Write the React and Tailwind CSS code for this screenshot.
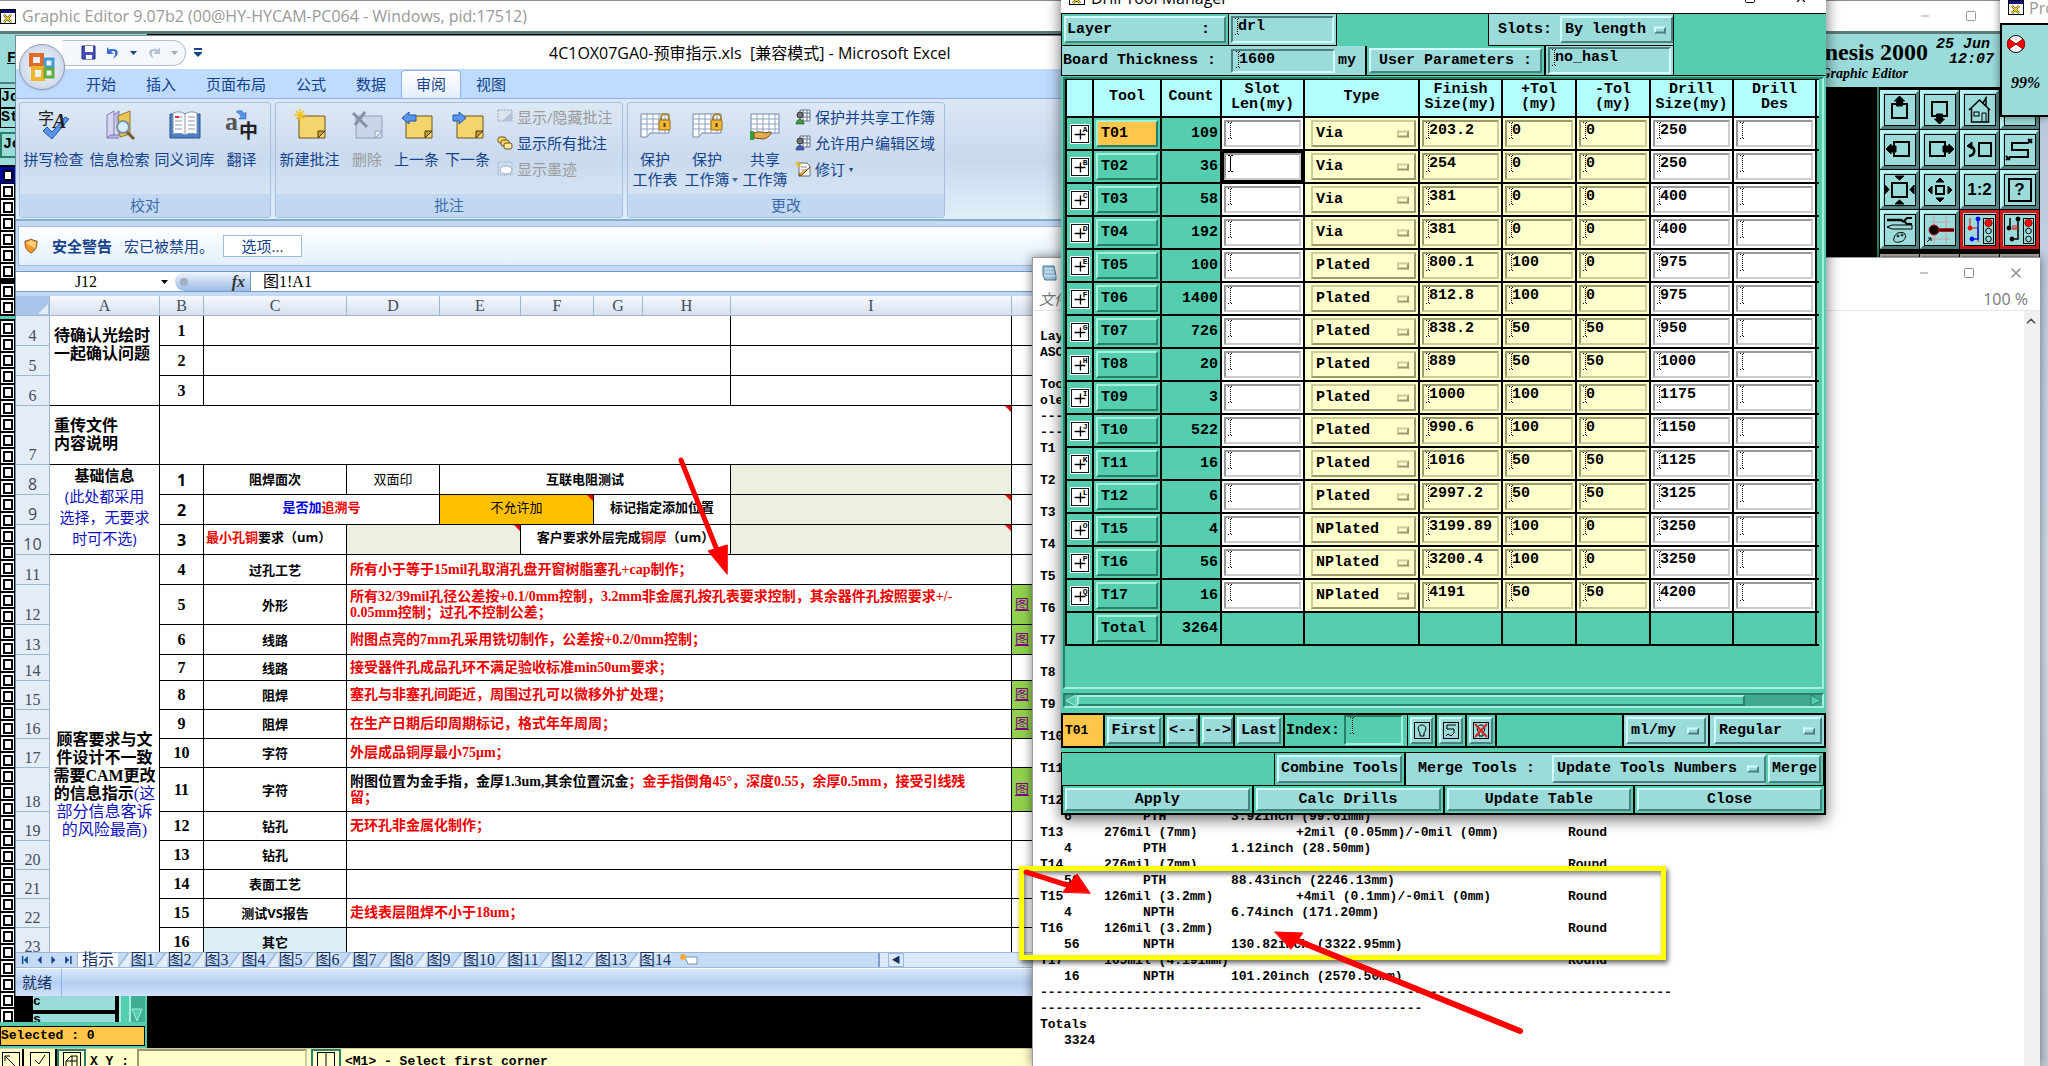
import React from 'react';
import { Minus, Square, X, ChevronUp } from 'lucide-react';

// Bevel styles shared by the Motif-like widgets
const tealBevel = 'border-2 border-t-[#a5f0dc] border-l-[#a5f0dc] border-b-[#2a7f68] border-r-[#2a7f68]';
const paleBevel = 'border-2 border-t-[#cfffff] border-l-[#cfffff] border-b-[#4d8080] border-r-[#4d8080]';
const paleInset = 'border-2 border-t-[#4d8080] border-l-[#4d8080] border-b-[#cfffff] border-r-[#cfffff]';
const tealInset = 'border-2 border-t-[#2a7f68] border-l-[#2a7f68] border-b-[#a5f0dc] border-r-[#a5f0dc]';
const creamInset = 'border-2 border-t-[#9a9a70] border-l-[#9a9a70] border-b-[#cccc9e] border-r-[#cccc9e]';
const creamBevel = 'border-2 border-t-[#cccc9e] border-l-[#cccc9e] border-b-[#9a9a70] border-r-[#9a9a70]';
const whiteInset = 'border-2 border-t-[#999999] border-l-[#999999] border-b-[#cccccc] border-r-[#cccccc]';
const mono = "font-['Liberation_Mono',monospace] font-bold text-[15px] leading-[18px] text-black";
const ui = "font-['Open_Sans','Noto_Sans_CJK_SC',sans-serif]";
const song = "font-['Liberation_Serif','Noto_Sans_CJK_SC',serif]";

const XIcon = () => (
  <svg width="16" height="15" viewBox="0 0 16 15" className="shrink-0">
    <rect x=".5" y=".5" width="15" height="14" fill="#fff" stroke="#000" />
    <rect x="1" y="1" width="14" height="3" fill="#101080" />
    <path d="M4 6l7 7M11 6l-7 7" stroke="#000" strokeWidth="2.4" />
    <path d="M4 6l7 7M11 6l-7 7" stroke="#ffee20" strokeWidth="1.4" />
  </svg>
);

/* ---------- Graphic editor in the background ---------- */

const Frame = ({ children }) => (
  <svg width="32" height="32" viewBox="0 0 32 32" fill="none" stroke="#000">
    <rect x=".5" y=".5" width="31" height="31" />
    {children}
  </svg>
);

const Traffic = () => (
  <>
    <rect x="19.5" y="4.5" width="10" height="25" fill="#9bdbda" />
    <circle cx="24.5" cy="9" r="3.6" fill="#f00" stroke="#900" />
    <circle cx="24.5" cy="17" r="2.8" />
    <circle cx="24.5" cy="25" r="2.8" />
  </>
);

const tools = [
  { name: 'Pan up', icon: <><rect x="8" y="10" width="15" height="14" strokeWidth="2" /><path d="M15.500 2l5 5h-2v5h-6V7h-2z" fill="#000" /></> },
  { name: 'Pan down', icon: <><rect x="8" y="8" width="15" height="14" strokeWidth="2" /><path d="M15.500 30l5-5h-2v-5h-6v5h-2z" fill="#000" /></> },
  { name: 'Home', icon: <><path d="M5 16L15.500 6 26 16M7.500 14v14h17V14M19 9l3-5v8" strokeWidth="1.500" /><rect x="10" y="18" width="5" height="4" /><path d="M18 28v-9h4v9" /></> },
  { name: 'Previous', icon: <rect x="8" y="8" width="15" height="14" strokeWidth="2" /> },
  { name: 'Pan left', icon: <><rect x="10" y="8" width="15" height="14" strokeWidth="2" /><path d="M2 15l5-5v2h5v6H7v2z" fill="#000" /></> },
  { name: 'Pan right', icon: <><rect x="6" y="8" width="15" height="14" strokeWidth="2" /><path d="M30 15l-5-5v2h-6v6h6v2z" fill="#000" /></> },
  { name: 'Back', icon: <><rect x="15" y="9" width="12" height="13" strokeWidth="2" /><path d="M5 22c7-1 7-9 0-10" strokeWidth="2.500" /><path d="M3 12l5-4v7z" fill="#000" /></> },
  { name: 'Serpentine', icon: <path d="M2 26l4-3h18v-7H8V9h16l4-4M2 22l4 4M24 5l4 4" strokeWidth="2" /> },
  { name: 'Zoom in', icon: <><rect x="8" y="9" width="15" height="14" strokeWidth="2" /><path d="M11 2h9l-4.500 4zM11 30h9l-4.500-4zM1 11v9l4-4.500zM30 11v9l-4-4.500z" fill="#000" /></> },
  { name: 'Zoom out', icon: <><rect x="12" y="12" width="8" height="8" strokeWidth="2" /><path d="M12 8h8l-4-4zM12 24h8l-4 4zM8 12v8l-4-4zM24 12v8l4-4z" fill="#000" /></> },
  { name: 'Scale', text: '1:2' },
  { name: 'Help', text: '?', boxed: true },
  { name: 'Settings', icon: <><path d="M3 6h14l3 2" strokeWidth="2.500" /><path d="M28 4h-5l-3 3 3 3h5" strokeWidth="2" /><path d="M3 13l5-2h20v4H8z" /><path d="M10 24c1-6 9-7 11-4 2 4-2 8-6 8-4 1-6-1-5-4z" /><circle cx="14" cy="22" r="1" /><circle cx="18" cy="21" r="1" /></> },
  { name: 'Snap', icon: <><path d="M6 8h20M6 25h20M10 2v28M22 2v28" stroke="#c9a0a8" /><path d="M14 16h16" stroke="#d01010" strokeWidth="4" /><path d="M14 16h16" strokeWidth="1.500" /><circle cx="10" cy="16" r="5" fill="#000" stroke="#d01010" /><path d="M3 28l4-4M4 24h3v3" /></> },
  { name: 'Measure', red: true, icon: <><path d="M6 4v10h8v14" stroke="#e01010" /><path d="M14 6v19H8" stroke="#1010e0" strokeWidth="1.500" /><circle cx="6" cy="14" r="2" fill="#f00" stroke="#f00" /><circle cx="14" cy="5" r="2" fill="#00f" stroke="#00f" /><circle cx="8" cy="25" r="2" fill="#00f" stroke="#00f" /><Traffic /></> },
  { name: 'Check', red: true, icon: <><path d="M6 4v10M14 6v19H8" strokeWidth="1.500" /><path d="M8 15h6M9 11v4M11 11v4M13 11v4" stroke="#e01010" /><circle cx="5" cy="14" r="2" fill="#000" /><circle cx="14" cy="5" r="2" fill="#000" /><circle cx="8" cy="25" r="2" fill="#000" /><Traffic /></> },
];

const LayerBox = ({ blue }) => (
  <div className={`h-4 w-[15px] shrink-0 p-px ${blue ? 'bg-[#0000a0]' : 'bg-black'}`}>
    <div className={`flex h-[14px] w-[13px] items-center justify-center ${blue ? 'bg-[#0000a0]' : 'bg-white'}`}>
      <div className="h-[11px] w-[10px] border-2 border-black bg-white" />
    </div>
  </div>
);

const GraphicEditor = () => (
  <div className="absolute inset-0 flex flex-col bg-black">
    <div className={`flex h-[34px] shrink-0 items-center gap-[6px] border-t border-b-[3px] border-t-[#8c8c94] border-b-[#5d7a7a] bg-white ${ui}`}>
      <XIcon />
      <h1 className="flex-1 text-[16px] text-[#999999]">Graphic Editor 9.07b2 (00@HY-HYCAM-PC064 - Windows, pid:17512)</h1>
      <div className="flex items-center gap-[34px] pr-[71px] text-[#999999]">
        <Minus size={12} strokeWidth={2} />
        <Square size={12} strokeWidth={2} />
      </div>
    </div>
    <div className="flex min-h-0 flex-1 justify-between">
      <div className="flex w-[147px] flex-col">
        <div className={`flex h-[131px] shrink-0 flex-col bg-[#9bdbda] ${mono}`}>
          <div className="h-[50px] border-b-2 border-[#4d8080] pt-4 pl-[7px] underline">File</div>
          <div className="mt-1 flex h-[20px] items-center border border-black">Job</div>
          <div className="flex h-[20px] items-center border border-black">Step</div>
          <div className="mt-1 flex h-[26px] items-center border-2 border-[#2a7f68] pl-px">Job</div>
        </div>
        <div className="flex min-h-0 flex-1">
          <div className="flex flex-col overflow-hidden bg-black pt-[2px]">
            <LayerBox blue />
            {[...Array(6)].map((_, i) => <LayerBox key={i} />)}
            <div className="h-[4px] shrink-0" />
            {[...Array(2)].map((_, i) => <LayerBox key={i} />)}
            <div className="my-px h-[3px] shrink-0 bg-[#54ceae]" />
            {[...Array(44)].map((_, i) => <LayerBox key={i} />)}
          </div>
          <div className={`ml-[18px] flex w-[82px] flex-col justify-end ${mono}`}>
            <div className="h-[14px] bg-[#9bdbda] text-[13px] leading-[12px]">c</div>
            <div className="mt-1 h-[8px] overflow-hidden bg-[#9bdbda] text-[13px] leading-[12px]">s</div>
          </div>
          <div className="ml-1 flex w-3 flex-col border-x-2 border-[#a5f0dc] bg-[#54ceae]" />
          <div className="flex flex-1 flex-col justify-end border-r-2 border-[#54ceae] bg-[#3fae92]">
            <svg width="12" height="14" viewBox="0 0 12 14"><path d="M1 1h10L6 13z" fill="#54ceae" stroke="#a5f0dc" /></svg>
          </div>
        </div>
        <div className="h-[26px] shrink-0 border-t-4 border-r-2 border-b-2 border-[#54ceae]">
          <div className={`flex h-[20px] items-center border border-black bg-[#ffc64a] ${mono}`}>
            <span className="text-[13px]">Selected : 0</span>
          </div>
        </div>
      </div>
      <div className="flex flex-col">
        <div className="flex h-[53px] justify-end gap-2 bg-[#9bdbda] pr-[54px] text-black">
          <div className="w-[150px] text-right font-['Liberation_Serif',serif] font-bold">
            <div className="pt-1 text-2xl leading-7">Genesis 2000</div>
            <div className="pr-5 text-[14px] leading-4 italic">Graphic Editor</div>
          </div>
          <div className={`pt-1 text-right italic ${mono}`}>
            <div className="pr-1 leading-[14px]">25 Jun</div>
            <div className="leading-[16px]">12:07</div>
          </div>
        </div>
        <div className="flex h-[180px] justify-end pr-2">
          <div className="grid grid-cols-4 content-start gap-px border-l-2 border-[#2a7f68] bg-black p-px pt-[3px]">
            {tools.map((t) => (
              <button
                key={t.name}
                aria-label={t.name}
                className={`flex h-[39px] w-[39px] items-center justify-center border-[3px] bg-[#9bdbda] ${
                  t.red
                    ? 'border-[#d01818]'
                    : 'border-t-[#b8f4f4] border-l-[#b8f4f4] border-b-[#4d8080] border-r-[#4d8080]'
                }`}
              >
                {t.text ? (
                  <span className="flex h-8 w-8 items-center justify-center border border-black font-['Liberation_Sans',sans-serif] text-[17px] font-bold">
                    <span className={t.boxed ? 'flex h-6 w-6 items-center justify-center border-2 border-black' : ''}>{t.text}</span>
                  </span>
                ) : (
                  <Frame>{t.icon}</Frame>
                )}
              </button>
            ))}
            {['a', 'b', 'c', 'd'].map((k) => (
              <div key={k} className="mt-1 h-2 border-t-2 border-l-2 border-[#b8b8b0] bg-[#8f9a96]" />
            ))}
          </div>
        </div>
      </div>
    </div>
    <div className={`flex h-[18px] shrink-0 items-start overflow-hidden border-t border-[#cccc9e] bg-[#ffffcc] ${mono}`}>
      <div className="flex h-7 w-[24px] items-center justify-center border-r-2 border-black">
        <svg width="18" height="22" viewBox="0 0 18 22" fill="none" stroke="#000"><rect x=".5" y=".5" width="17" height="21" /><path d="M3 4l10 10M3 9V4h5" /></svg>
      </div>
      <div className="flex h-7 w-[33px] items-center justify-center border-r-2 border-black">
        <svg width="20" height="22" viewBox="0 0 20 22" fill="none" stroke="#000"><rect x=".5" y=".5" width="19" height="21" /><path d="M5 8l4 4 6-9" /></svg>
      </div>
      <div className="flex h-7 w-[29px] items-center justify-center border-2 border-[#2a7f68] bg-[#ffffcc]">
        <svg width="18" height="22" viewBox="0 0 18 22" fill="none" stroke="#000"><rect x=".5" y=".5" width="17" height="21" /><path d="M3 9l5-5h6v12H3zM3 9h11M9 4v12" /></svg>
      </div>
      <label htmlFor="xy" className="pt-1 pr-2 pl-1 text-[13px]">X Y :</label>
      <input id="xy" className={`h-7 w-[170px] bg-[#ffffcc] ${creamInset}`} />
      <div className="ml-1 flex h-7 w-[30px] items-center justify-center border-2 border-[#2a7f68]">
        <svg width="18" height="22" viewBox="0 0 18 22" fill="none" stroke="#000"><rect x=".5" y=".5" width="17" height="21" /><path d="M9 1v20" /></svg>
      </div>
      <span className="pt-1 pl-1 text-[13px]">&lt;M1&gt; - Select first corner</span>
    </div>
  </div>
);

/* ---------- Excel ---------- */

const Note = ({ gray, children }) => (
  <svg width="32" height="32" viewBox="0 0 32 32">
    <path d="M5 7h26v22H5z" fill={gray ? '#c9d6e8' : '#f3d56b'} stroke={gray ? '#8fa0bb' : '#6b5520'} />
    <path d="M24 29v-7h7z" fill={gray ? '#e8eef6' : '#c99b2c'} stroke={gray ? '#8fa0bb' : '#4a3a10'} />
    {children}
  </svg>
);
const Grid = ({ children }) => (
  <svg width="32" height="32" viewBox="0 0 32 32">
    <path d="M2 5h28v19H11l-3 4H2z" fill="#fff" stroke="#6e86ab" />
    <path d="M2 10h28M2 15h28M2 20h28M8 5v22M14 5v19M20 5v19M26 5v19" stroke="#8ba3c4" />
    {children}
  </svg>
);
const Lock = () => (
  <>
    <path d="M22 12V9a4 4 0 018 0v3" fill="none" stroke="#a8873a" strokeWidth="2" />
    <rect x="20" y="11" width="11" height="10" rx="1" fill="#f1b833" stroke="#9a6b14" />
    <path d="M25.500 14v4" stroke="#4b3510" strokeWidth="2" />
  </>
);
const SpellIcon = () => (
  <svg width="32" height="32" viewBox="0 0 32 32">
    <path d="M5 22l4-4 5 5L27 8l4 2-17 20z" fill="#5a93e8" stroke="#2459b0" />
    <text x="0" y="15" fontSize="16" fontFamily="Noto Sans CJK SC" fill="#222">字</text>
    <text x="15" y="19" fontSize="20" fontWeight="bold" fontStyle="italic" fontFamily="Liberation Serif" fill="#222">A</text>
  </svg>
);
const ResearchIcon = () => (
  <svg width="32" height="32" viewBox="0 0 32 32">
    <path d="M3 6l7-4v24l-7 3z" fill="#d9d6f2" stroke="#7c79b5" />
    <path d="M10 6l5-4v24H6l-3 3h12" fill="#b9b6e8" stroke="#7c79b5" />
    <path d="M14 7l12-5v23l-10 3z" fill="#e8c85c" stroke="#957520" />
    <circle cx="19" cy="18" r="6" fill="#d5ecfa" stroke="#7f8ea0" strokeWidth="2" />
    <path d="M23 23l7 7" stroke="#7b5a30" strokeWidth="3" />
  </svg>
);
const BookIcon = () => (
  <svg width="32" height="32" viewBox="0 0 32 32">
    <path d="M1 5h30v24H1z" fill="#4a7fc4" stroke="#2c5591" />
    <path d="M4 4c5-2 9-1 12 1 3-2 7-3 12-1v21c-5-1-9-1-12 1-3-2-7-2-12-1z" fill="#fff" stroke="#7d93b3" />
    <path d="M16 5v21M6 8h7M6 12h7M6 16h7M6 20h7M19 8h7M19 12h7M19 16h7M19 20h7" stroke="#8a97a8" />
    <path d="M6 8h4" stroke="#d33" strokeWidth="2" />
  </svg>
);
const TranslateIcon = () => (
  <svg width="34" height="32" viewBox="0 0 34 32">
    <text x="0" y="21" fontSize="26" fontWeight="bold" fontFamily="Liberation Serif" fill="#555">a</text>
    <text x="14" y="29" fontSize="19" fontWeight="bold" fontFamily="Noto Sans CJK SC" fill="#222">中</text>
    <path d="M11 3c5-3 7-1 8 2l2-2v7h-7l2-3c-1-2-3-3-5-4z" fill="#5a93e8" stroke="#2459b0" strokeWidth=".5" />
  </svg>
);
const ArrowShape = ({ left }) => (
  <path
    d={left ? 'M1 9l7-6v3h7v6H8v3z' : 'M14 9L7 3v3H1v6h6v3z'}
    fill="#5a93e8"
    stroke="#2459b0"
  />
);

const BigButton = ({ icon, label, width, disabled }) => (
  <button disabled={disabled} className={`mt-[3px] flex flex-col items-center ${width} ${disabled ? 'text-[#9a9a9a]' : 'text-[#15428b]'}`}>
    <span className="flex h-9 items-center">{icon}</span>
    <span className="mt-[6px] text-[15px] leading-5 whitespace-pre">{label}</span>
  </button>
);

const SmallIcon = ({ kind }) => (
  <svg width="16" height="16" viewBox="0 0 16 16" className="shrink-0">
    {kind === 'note' && <><path d="M1 1h14v11H1z" fill="#dbe3ee" stroke="#9aa7ba" strokeDasharray="2 1" /><path d="M5 12L15 3v9z" fill="#b5c2d6" /></>}
    {kind === 'notes' && <><rect x="1" y="2" width="8" height="6" rx="2" fill="#f3d56b" stroke="#6b5520" /><rect x="4" y="5" width="8" height="6" rx="2" fill="#f3d56b" stroke="#6b5520" /><rect x="7" y="8" width="8" height="6" rx="2" fill="#f8e79c" stroke="#6b5520" /></>}
    {kind === 'ink' && <><path d="M1 1h14v13H1z" fill="none" stroke="#9aa7ba" strokeDasharray="1 1" /><ellipse cx="9" cy="9" rx="6" ry="4" fill="#fff" stroke="#9aa7ba" /></>}
    {(kind === 'share' || kind === 'users') && <><path d="M5 1h10v11H5zM5 4h10M5 8h10M8 1v11M12 1v11" fill="#fff" stroke="#5d6f8a" /><circle cx="5" cy="6" r="3" fill="#777" stroke="#333" /><path d="M1 15c0-6 8-6 8 0z" fill={kind === 'share' ? '#35a13a' : '#3a5fd0'} stroke="#333" strokeWidth=".6" /></>}
    {kind === 'track' && <><path d="M4 2h8l3 3v10H4z" fill="#fff" stroke="#666" /><path d="M6 6h6M6 9h6" stroke="#888" /><path d="M15 6l-8 8-3 1 1-3" fill="#e8a33d" stroke="#7a4a10" /><path d="M3 0v7M0 3h7M1 1l5 5" stroke="#f2b705" /></>}
  </svg>
);

const SmallButton = ({ kind, label, disabled, menu }) => (
  <button disabled={disabled} className={`flex h-[26px] items-center gap-1 text-[15px] whitespace-nowrap ${disabled ? 'text-[#9a9a9a]' : 'text-[#15428b]'}`}>
    <SmallIcon kind={kind} />
    {label}
    {menu && <span className="text-[8px]">▾</span>}
  </button>
);

const RibbonGroup = ({ title, width, children }) => (
  <section className={`flex h-[116px] flex-col rounded-[3px] border border-[#a6bfdd] bg-linear-to-b from-[#dde8f5] via-[#c9daee] to-[#dcebf8] ${width}`}>
    <div className="flex flex-1 pt-px">{children}</div>
    <h2 className="h-[23px] rounded-b-[3px] bg-[#c1d8f0] text-center text-[15px] leading-[22px] text-[#3e6aaa]">{title}</h2>
  </section>
);

const ribbonTabs = [
  ['开始', 'w-[60px]'], ['插入', 'w-[60px]'], ['页面布局', 'w-[90px]'], ['公式', 'w-[60px]'],
  ['数据', 'w-[60px]'], ['审阅', 'w-[60px]'], ['视图', 'w-[60px]'],
];

const B = 'border-r border-b border-black';
const RowHead = ({ n }) => (
  <th className="border-r border-b border-[#9eb6ce] bg-[#e4ecf7] pb-px align-bottom text-[16px] leading-[17px] font-normal text-[#444c5c]">{n}</th>
);
const Mark = () => (
  <span className="absolute top-0 right-0 border-t-[6px] border-l-[6px] border-t-[#f00000] border-l-transparent" />
);
const Num = ({ n }) => <td className={`${B} text-center text-[16px] font-bold`}>{n}</td>;

const specRows = [
  { r: 11, h: 'h-[30px]', n: 4, kind: '过孔工艺', text: '所有小于等于15mil孔取消孔盘开窗树脂塞孔+cap制作；' },
  { r: 12, h: 'h-[40px]', n: 5, kind: '外形', link: true, text: <>所有32/39mil孔径公差按+0.1/0mm控制，3.2mm非金属孔按孔表要求控制，其余器件孔按照要求+/-<br />0.05mm控制；过孔不控制公差；</> },
  { r: 13, h: 'h-[30px]', n: 6, kind: '线路', link: true, text: '附图点亮的7mm孔采用铣切制作，公差按+0.2/0mm控制；' },
  { r: 14, h: 'h-[26px]', n: 7, kind: '线路', text: '接受器件孔成品孔环不满足验收标准min50um要求；' },
  { r: 15, h: 'h-[29px]', n: 8, kind: '阻焊', link: true, text: '塞孔与非塞孔间距近，周围过孔可以微移外扩处理；' },
  { r: 16, h: 'h-[29px]', n: 9, kind: '阻焊', link: true, text: '在生产日期后印周期标记，格式年年周周；' },
  { r: 17, h: 'h-[29px]', n: 10, kind: '字符', text: '外层成品铜厚最小75μm；' },
  { r: 18, h: 'h-[44px]', n: 11, kind: '字符', link: true, text: <><span className="text-black">附图位置为金手指，金厚1.3um,其余位置沉金</span>；金手指倒角45°，深度0.55，余厚0.5mm，接受引线残<br />留；</> },
  { r: 19, h: 'h-[29px]', n: 12, kind: '钻孔', text: '无环孔非金属化制作；' },
  { r: 20, h: 'h-[29px]', n: 13, kind: '钻孔', text: '' },
  { r: 21, h: 'h-[29px]', n: 14, kind: '表面工艺', text: '' },
  { r: 22, h: 'h-[29px]', n: 15, kind: '测试VS报告', text: '走线表层阻焊不小于18um；' },
  { r: 23, h: 'h-[29px]', n: 16, kind: '其它', text: '', other: true },
];

const Sheet = () => (
  <table className={`w-[1120px] table-fixed border-separate border-spacing-0 bg-white text-black ${song}`}>
    <colgroup>
      <col className="w-[34px]" /><col className="w-[110px]" /><col className="w-[44px]" /><col className="w-[143px]" />
      <col className="w-[93px]" /><col className="w-[81px]" /><col className="w-[73px]" /><col className="w-[49px]" />
      <col className="w-[88px]" /><col className="w-[281px]" /><col />
    </colgroup>
    <thead>
      <tr className="h-5">
        <th className="border-r border-b border-[#9eb6ce] bg-[#a9c4e9] align-bottom">
          <svg width="12" height="12" viewBox="0 0 12 12" className="ml-auto"><path d="M11 1v10H1z" fill="#e4ecf7" /></svg>
        </th>
        {['A', 'B', 'C', 'D', 'E', 'F', 'G', 'H', 'I', ''].map((c) => (
          <th key={c} className="border-r border-b border-[#9eb6ce] bg-linear-to-b from-[#f6f9fd] to-[#d6e0ee] text-[16px] leading-[18px] font-normal text-[#444c5c]">{c}</th>
        ))}
      </tr>
    </thead>
    <tbody>
      {[4, 5, 6].map((r, i) => (
        <tr key={r} className="h-[30px]">
          <RowHead n={r} />
          {i === 0 && (
            <td rowSpan={3} className={`${B} pt-[11px] pl-1 align-top text-[16px] leading-[18px] font-bold whitespace-nowrap`}>待确认光绘时<br />一起确认问题</td>
          )}
          <Num n={i + 1} />
          <td colSpan={6} className={B} />
          <td className={B} />
          <td className={B} />
        </tr>
      ))}
      <tr className="h-[59px]">
        <RowHead n={7} />
        <td className={`${B} pl-1 text-[16px] leading-[18px] font-bold`}>重传文件<br />内容说明</td>
        <td colSpan={8} className={`${B} relative`}><Mark /></td>
        <td className={B} />
      </tr>
      <tr className={`h-[30px] text-[13px] ${ui}`}>
        <RowHead n={8} />
        <td rowSpan={3} className={`${B} text-center align-top text-[15px] leading-[21px] whitespace-nowrap text-[#1010c0]`}>
          <b className="text-black">基础信息</b><br />(此处都采用<br />选择，无要求<br />时可不选)
        </td>
        <Num n={1} />
        <td className={`${B} text-center font-bold`}>阻焊面次</td>
        <td className={`${B} text-center`}>双面印</td>
        <td colSpan={4} className={`${B} text-center font-bold`}>互联电阻测试</td>
        <td className={`${B} bg-[#ebf1de]`} />
        <td className={B} />
      </tr>
      <tr className={`h-[30px] text-[13px] ${ui}`}>
        <RowHead n={9} />
        <Num n={2} />
        <td colSpan={2} className={`${B} pb-1 text-center font-bold text-[#0000e0]`}>是否加<span className="text-[#f00000]">追溯号</span></td>
        <td colSpan={2} className={`${B} relative bg-[#ffc000] pb-1 text-center`}>不允许加<Mark /></td>
        <td colSpan={2} className={`${B} pb-1 text-center font-bold`}>标记指定添加位置</td>
        <td className={`${B} relative bg-[#ebf1de]`}><Mark /></td>
        <td className={B} />
      </tr>
      <tr className={`h-[30px] text-[13px] ${ui}`}>
        <RowHead n={10} />
        <Num n={3} />
        <td className={`${B} pb-1 pl-[2px] font-bold whitespace-nowrap`}><span className="text-[#f00000]">最小孔铜</span>要求（um）</td>
        <td colSpan={2} className={`${B} relative bg-[#ebf1de]`}><Mark /></td>
        <td colSpan={3} className={`${B} pb-1 text-center font-bold whitespace-nowrap`}>客户要求外层完成<span className="text-[#f00000]">铜厚</span>（um）</td>
        <td className={`${B} relative bg-[#ebf1de]`}><Mark /></td>
        <td className={B} />
      </tr>
      {specRows.map((s, i) => (
        <tr key={s.r} className={s.h}>
          <RowHead n={s.r} />
          {i === 0 && (
            <td rowSpan={13} className={`${B} pt-[58px] text-center text-[16px] leading-[18px] font-bold`}>
              顾客要求与文<br />件设计不一致<br />需要CAM更改<br />的信息指示<span className="font-normal text-[#1010c0]">(这<br />部分信息客诉<br />的风险最高)</span>
            </td>
          )}
          <Num n={s.n} />
          <td className={`${B} text-center text-[13px] leading-5 font-bold ${ui} ${s.other ? 'bg-[#daeef3]' : ''}`}>{s.kind}</td>
          <td colSpan={6} className={`${B} pl-[3px] text-[14px] leading-4 font-bold whitespace-nowrap text-[#f00000]`}>{s.text}</td>
          <td className={`${B} pl-[3px] text-[14px] leading-4 ${s.link ? 'bg-[#92d050]' : ''}`}>
            {s.link && <a href="#sheet" className="text-[#800080] underline">图</a>}
          </td>
        </tr>
      ))}
    </tbody>
  </table>
);

const Excel = () => (
  <div className={`absolute top-[35px] left-[15px] flex h-[961px] w-[1120px] flex-col overflow-hidden border-t border-l border-[#6a8ca0] bg-[#c5d9f5] ${ui}`}>
    <div className="flex h-[33px] shrink-0 items-center bg-white">
      <div className="ml-[47px] flex h-[26px] w-[123px] items-center gap-[10px] rounded-r-full border border-l-0 border-[#b4bfcd] bg-[#f4f7fb] pl-[18px]">
        <svg width="15" height="15" viewBox="0 0 15 15"><path d="M1 1h13v13H1z" fill="#4450b8" stroke="#202a80" /><path d="M4 1h8v6H4zM5 10h6v4H5z" fill="#fff" /></svg>
        <svg width="14" height="14" viewBox="0 0 14 14"><path d="M1 1v7h7L5 5.500c4-2 6 2 2 7.500 7-4 7-12-4-9.500z" fill="#3a6fd0" /></svg>
        <svg width="7" height="4" viewBox="0 0 7 4"><path d="M0 0h7L3.500 4z" fill="#15428b" /></svg>
        <svg width="14" height="14" viewBox="0 0 14 14"><path d="M13 1v7H6l3-2.500C5 3.500 3 7.500 7 13 0 9 0 1 11 3.500z" fill="#b4c0d0" /></svg>
        <svg width="7" height="4" viewBox="0 0 7 4"><path d="M0 0h7L3.500 4z" fill="#a0a8b4" /></svg>
      </div>
      <svg width="8" height="9" viewBox="0 0 8 9" className="ml-2"><path d="M0 0h8v2H0zM0 4h8v1L4 9 0 5z" fill="#15428b" /></svg>
      <h1 className="ml-[347px] text-[16px] whitespace-pre text-black">4C1OX07GA0-预审指示.xls  [兼容模式] - Microsoft Excel</h1>
    </div>
    <nav className="flex h-[30px] shrink-0 items-end border-b border-[#8db2e3] bg-[#bfdbff] pl-[55px]">
      {ribbonTabs.map(([t, w]) => (
        <button
          key={t}
          className={`${w} h-7 text-[15px] text-[#15428b] ${
            t === '审阅' ? 'rounded-t-[4px] border border-b-0 border-[#8db2e3] bg-linear-to-b from-white to-[#e3eefb]' : ''
          }`}
        >
          {t}
        </button>
      ))}
    </nav>
    <div className="absolute top-[8px] left-[3px] flex h-[46px] w-[46px] items-center justify-center rounded-full border border-[#8d9bb0] bg-radial from-white to-[#b9c9e2] shadow">
      <svg width="30" height="32" viewBox="0 0 30 32" fill="none" strokeWidth="4">
        <rect x="4" y="4" width="11" height="10" stroke="#e06a28" />
        <rect x="18" y="8" width="8" height="8" stroke="#3d9bd8" strokeWidth="3" />
        <rect x="6" y="17" width="10" height="11" stroke="#f0b429" />
        <rect x="18" y="18" width="8" height="8" stroke="#5cab3c" strokeWidth="3" />
      </svg>
    </div>
    <div className="flex h-[122px] shrink-0 gap-1 border-b-2 border-[#7fb0c8] bg-linear-to-b from-[#dbe7f5] via-[#c8d9ee] to-[#dff0fa] pt-[3px] pl-[3px]">
      <RibbonGroup title="校对" width="w-[252px]">
        <BigButton icon={<SpellIcon />} label="拼写检查" width="w-[67px]" />
        <BigButton icon={<ResearchIcon />} label="信息检索" width="w-[65px]" />
        <BigButton icon={<BookIcon />} label="同义词库" width="w-[65px]" />
        <BigButton icon={<TranslateIcon />} label="翻译" width="w-[49px]" />
      </RibbonGroup>
      <RibbonGroup title="批注" width="w-[348px]">
        <BigButton icon={<Note><path d="M6 0v12M0 6h12M2 2l8 8M10 2l-8 8" stroke="#f2c218" strokeWidth="1.500" /></Note>} label="新建批注" width="w-[67px]" />
        <BigButton disabled icon={<Note gray><path d="M2 4l14 14M14 3L4 16" stroke="#8793a6" strokeWidth="3" /></Note>} label="删除" width="w-[48px]" />
        <BigButton icon={<Note><ArrowShape left /></Note>} label="上一条" width="w-[51px]" />
        <BigButton icon={<Note><ArrowShape /></Note>} label="下一条" width="w-[51px]" />
        <div className="ml-[4px] flex flex-col">
          <SmallButton disabled kind="note" label="显示/隐藏批注" />
          <SmallButton kind="notes" label="显示所有批注" />
          <SmallButton disabled kind="ink" label="显示墨迹" />
        </div>
      </RibbonGroup>
      <RibbonGroup title="更改" width="w-[318px]">
        <BigButton icon={<Grid><Lock /></Grid>} label={'保护\n工作表'} width="w-[54px]" />
        <BigButton icon={<Grid><Lock /></Grid>} label={'保护\n工作簿'} width="w-[50px]" />
        <svg width="6" height="4" viewBox="0 0 6 4" className="mt-[74px]"><path d="M0 0h6L3 4z" fill="#3e6aaa" /></svg>
        <BigButton icon={<Grid><path d="M1 22h4v9H1z" fill="#35a13a" /><path d="M5 24c5-2 8-1 11 0l6-1c1 2-3 6-8 7l-9-1z" fill="#e3ab52" stroke="#7a4a10" /></Grid>} label={'共享\n工作簿'} width="w-[54px]" />
        <div className="ml-[3px] flex flex-col">
          <SmallButton kind="share" label="保护并共享工作簿" />
          <SmallButton kind="users" label="允许用户编辑区域" />
          <SmallButton kind="track" label="修订" menu />
        </div>
      </RibbonGroup>
    </div>
    <div className="mt-[5px] ml-[2px] flex h-[40px] shrink-0 items-center border border-[#9ebbe0] bg-linear-to-b from-white to-[#e2f0fb] text-[15px] text-[#15428b]">
      <svg width="14" height="16" viewBox="0 0 14 16" className="ml-[5px]"><path d="M7 1c2 1 4 2 6 2 0 6-1 9-6 12C2 12 1 9 1 3c2 0 4-1 6-2z" fill="#f59a23" stroke="#8a5a2b" /><path d="M7 2c2 1 3 2 5 2 0 3 0 4-1 6L3 6V4c2 0 3-1 4-2z" fill="#fbd07a" /></svg>
      <b className="ml-[14px]">安全警告</b>
      <span className="ml-3">宏已被禁用。</span>
      <button className="ml-[9px] h-[22px] w-[79px] border border-[#9ebbe0] bg-white leading-5">选项...</button>
    </div>
    <div className={`mt-[5px] flex h-[21px] shrink-0 items-center border-y border-[#6f9dc8] bg-white text-[16px] text-black ${song}`}>
      <input aria-label="Name box" defaultValue="J12" className="w-[140px] text-center" />
      <svg width="7" height="4" viewBox="0 0 7 4" className="ml-[5px]"><path d="M0 0h7L3.500 4z" fill="#000" /></svg>
      <div className="ml-[7px] flex h-[19px] w-[76px] items-center justify-between rounded-l-full border-r border-[#6f9dc8] bg-linear-to-b from-[#eef4fc] to-[#9dbbe6] pr-[5px] pl-[5px]">
        <span className="h-2 w-2 rounded-full bg-[#a8b4c6] shadow-inner" />
        <i className="leading-4 font-bold text-[#333]">fx</i>
      </div>
      <input aria-label="Formula" defaultValue="图1!A1" className="ml-3 flex-1" />
    </div>
    <div className="h-[4px] shrink-0" />
    <div className="min-h-0 flex-1 overflow-hidden"><Sheet /></div>
    <div className={`flex h-[16px] shrink-0 items-center border-t border-b border-[#9db8d8] bg-[#c4daf5] text-[16px] leading-[14px] text-[#15305f] ${song}`}>
      <svg width="62" height="14" viewBox="0 0 62 14" className="shrink-0 border-r border-[#9db8d8]" fill="#15428b">
        <path d="M6 3h1.500v8H6zM12 3v8L8 7zM26 3v8l-4-4zM36 3v8l4-4zM50 3v8l4-4zM55 3h1.500v8H55z" />
      </svg>
      <button className="h-full w-10 bg-white">指示</button>
      {[...Array(14)].map((_, i) => (
        <React.Fragment key={i}>
          <svg width="12" height="14" viewBox="0 0 12 14" className="shrink-0"><path d="M0 14L10 0" stroke="#8aa4c8" /><path d="M2 14L12 0v14z" fill="#e3eefb" /></svg>
          <button className={`h-full bg-linear-to-b from-[#e3eefb] to-[#b5d0f0] ${i < 9 ? 'w-[25px]' : 'w-[32px]'}`}>图{i + 1}</button>
        </React.Fragment>
      ))}
      <svg width="20" height="14" viewBox="0 0 20 14" className="ml-2"><path d="M6 4h12v7H9z" fill="#fff" stroke="#7d93b3" /><circle cx="4" cy="4" r="3" fill="#f2a93b" /></svg>
      <div className="ml-[179px] flex h-full flex-1 items-center border-l-2 border-[#7f9cc4] bg-[#dbe8f8] pl-2">
        <span className="h-full w-4 border border-[#9db8d8] text-center text-[9px] leading-3">◀</span>
      </div>
    </div>
    <div className="flex h-7 shrink-0 items-center border-t border-white bg-linear-to-b from-[#dbe9fb] via-[#b5cff2] to-[#cfe2fb] text-[15px] text-[#15305f]">
      <span className="flex h-full w-[46px] items-center border-r border-[#8db2e3] pl-[6px]">就绪</span>
    </div>
  </div>
);

/* ---------- Notepad ---------- */

const drillReport = [
  ['T13', '276mil (7mm)', '+2mil (0.05mm)/-0mil (0mm)', '4', 'PTH', '1.12inch (28.50mm)'],
  ['T14', '276mil (7mm)', '', '56', 'PTH', '88.43inch (2246.13mm)'],
  ['T15', '126mil (3.2mm)', '+4mil (0.1mm)/-0mil (0mm)', '4', 'NPTH', '6.74inch (171.20mm)'],
  ['T16', '126mil (3.2mm)', '', '56', 'NPTH', '130.82inch (3322.95mm)'],
  ['T17', '165mil (4.191mm)', '', '16', 'NPTH', '101.20inch (2570.50mm)'],
];

const CountLine = ({ count, type, length }) => (
  <div className="flex h-4">
    <span className="w-[103px] pl-6">{count}</span>
    <span className="w-[88px]">{type}</span>
    <span>{length}</span>
  </div>
);

const Notepad = () => (
  <div className="absolute top-[257px] right-2 bottom-0 left-[1032px] flex flex-col border-t border-l border-[#9a9a9a] bg-white shadow-[0_0_10px_rgba(0,0,0,0.5)]">
    <div className="flex h-[30px] shrink-0 items-center justify-between pr-4 pl-2 text-[#888]">
      <svg width="16" height="16" viewBox="0 0 16 16"><path d="M2 1h11l2 10v4H4L2 10z" fill="#9cc3dc" stroke="#4a7896" /><path d="M4 4h8M4 7h9M3 11h12" stroke="#e8f4fa" /></svg>
      <div className="flex items-center gap-[33px]">
        <Minus size={12} strokeWidth={2} />
        <Square size={12} strokeWidth={2} />
        <X size={16} strokeWidth={2} />
      </div>
    </div>
    <div className={`flex h-[23px] shrink-0 items-center justify-between border-b border-[#e8e8e8] pr-3 pl-[6px] text-[#777] ${ui}`}>
      <span className="text-[15px] italic">文件</span>
      <span className="text-[16px]">100 %</span>
    </div>
    <div className="flex min-h-0 flex-1">
      <div className="min-w-0 flex-1 overflow-hidden pt-[18px] pl-[7px] font-['Liberation_Mono',monospace] text-[13px] leading-4 font-bold whitespace-pre text-black">
        <div>Layer</div>
        <div>ASCII</div>
        <div className="h-4" />
        <div>Tool</div>
        <div>oles</div>
        <div>-----</div>
        <div>-----</div>
        {[...Array(12)].map((_, i) => (
          <div key={i} className={i < 11 ? 'h-8' : 'h-4'}>T{i + 1}</div>
        ))}
        <CountLine count="6" type="PTH" length="3.92inch (99.61mm)" />
        {drillReport.map(([tool, size, tol, count, type, length]) => (
          <React.Fragment key={tool}>
            <div className="flex h-4">
              <span className="w-16">{tool}</span>
              <span className="w-48">{size}</span>
              <span className="w-[272px]">{tol}</span>
              <span>Round</span>
            </div>
            <CountLine count={count} type={type} length={length} />
          </React.Fragment>
        ))}
        <div>{'-'.repeat(81)}</div>
        <div>{'-'.repeat(49)}</div>
        <div>Totals</div>
        <div className="pl-6">3324</div>
      </div>
      <div className="w-4 shrink-0 bg-[#f0f0f0] pt-[3px] text-[#555]"><ChevronUp size={14} strokeWidth={3} /></div>
    </div>
  </div>
);

/* ---------- Drill tool manager ---------- */

const Caret = ({ solid }) => (
  <svg width="5" height="17" viewBox="0 0 5 17" className="-mr-[2px] shrink-0" stroke="#000" fill="none">
    <path d="M0 .5h2M3 .5h2M0 16.500h2M3 16.500h2M2.500 1v15" strokeDasharray={solid ? 'none' : '1 1'} />
  </svg>
);

const Field = ({ label, value, look, solid }) => (
  <div className={`flex h-[27px] min-w-0 flex-1 items-start pl-[2px] ${look}`}>
    <Caret solid={solid} />
    <input aria-label={label} defaultValue={value} className="w-full min-w-0 bg-transparent outline-none" />
  </div>
);

const Menu = ({ label, value, look, knob }) => (
  <div className={`relative flex items-center ${look}`}>
    <select aria-label={label} defaultValue={value} className="w-full appearance-none bg-transparent pl-[3px] outline-none">
      <option>{value}</option>
    </select>
    <span className={`pointer-events-none absolute top-1/2 right-[5px] h-[7px] w-3 -translate-y-1/2 ${knob}`} />
  </div>
);

const drills = [
  ['A', 'T01', 109, 'Via', '203.2', '0', '0', '250'],
  ['B', 'T02', 36, 'Via', '254', '0', '0', '250'],
  ['C', 'T03', 58, 'Via', '381', '0', '0', '400'],
  ['D', 'T04', 192, 'Via', '381', '0', '0', '400'],
  ['E', 'T05', 100, 'Plated', '800.1', '100', '0', '975'],
  ['F', 'T06', 1400, 'Plated', '812.8', '100', '0', '975'],
  ['G', 'T07', 726, 'Plated', '838.2', '50', '50', '950'],
  ['H', 'T08', 20, 'Plated', '889', '50', '50', '1000'],
  ['I', 'T09', 3, 'Plated', '1000', '100', '0', '1175'],
  ['J', 'T10', 522, 'Plated', '990.6', '100', '0', '1150'],
  ['K', 'T11', 16, 'Plated', '1016', '50', '50', '1125'],
  ['L', 'T12', 6, 'Plated', '2997.2', '50', '50', '3125'],
  ['O', 'T15', 4, 'NPlated', '3199.89', '100', '0', '3250'],
  ['P', 'T16', 56, 'NPlated', '3200.4', '100', '0', '3250'],
  ['Q', 'T17', 16, 'NPlated', '4191', '50', '50', '4200'],
];

const cell = 'border-l-2 border-b-2 border-black px-[2px] py-0';
const heads = ['', 'Tool', 'Count', 'Slot\nLen(my)', 'Type', 'Finish\nSize(my)', '+Tol\n(my)', '-Tol\n(my)', 'Drill\nSize(my)', 'Drill\nDes', ''];

const DrillTable = () => (
  <table className="w-full table-fixed border-separate border-spacing-0">
    <colgroup>
      <col className="w-[27px]" /><col className="w-[68px]" /><col className="w-[60px]" /><col className="w-[83px]" />
      <col className="w-[115px]" /><col className="w-[83px]" /><col className="w-[74px]" /><col className="w-[74px]" />
      <col className="w-[83px]" /><col className="w-[83px]" /><col />
    </colgroup>
    <thead>
      <tr className="h-[39px]">
        {heads.map((h, i) => (
          <th key={i} className="border-t border-b-2 border-l-2 border-black bg-[#b3ffff] p-0 pb-[3px] leading-[15px] whitespace-pre">{h}</th>
        ))}
      </tr>
    </thead>
    <tbody>
      {drills.map(([sym, tool, count, type, finish, plus, minus, size], i) => (
        <tr key={tool} className="h-[33px]">
          <td className={cell}>
            <svg width="20" height="20" viewBox="0 0 20 20" className="ml-px border border-white">
              <rect x=".5" y=".5" width="19" height="19" fill="#fff" stroke="#000" />
              <path d="M4 10.500h12M10.500 5v11" stroke="#000" strokeWidth="1.500" />
              <text x="13" y="8" fontSize="9" fontFamily="Liberation Mono">{sym}</text>
            </svg>
          </td>
          <td className={cell}>
            <button className={`h-[27px] w-full pl-[3px] text-left ${tealBevel} ${i === 0 ? 'bg-[#ffc64a]' : ''}`}>{tool}</button>
          </td>
          <td className={`${cell} text-right`}>{count}</td>
          <td className={`${cell} bg-white ${i === 1 ? 'shadow-[inset_0_0_0_2px_#000]' : ''}`}>
            <Field label={`${tool} slot length`} look={`bg-white ${whiteInset}`} value="" solid={i === 1} />
          </td>
          <td className={`${cell} bg-[#ffffcc]`}>
            <Menu label={`${tool} type`} value={type} look={`ml-1 h-[27px] ${creamBevel}`} knob={creamBevel} />
          </td>
          <td className={`${cell} bg-[#ffffcc]`}><Field label={`${tool} finish size`} value={finish} look={creamInset} /></td>
          <td className={`${cell} bg-[#ffffcc]`}><Field label={`${tool} plus tolerance`} value={plus} look={creamInset} /></td>
          <td className={`${cell} bg-[#ffffcc]`}><Field label={`${tool} minus tolerance`} value={minus} look={creamInset} /></td>
          <td className={`${cell} bg-white`}><Field label={`${tool} drill size`} value={size} look={whiteInset} /></td>
          <td className={`${cell} bg-white`}><Field label={`${tool} designator`} value="" look={whiteInset} /></td>
          <td className={cell} />
        </tr>
      ))}
      <tr className="h-[33px]">
        <td className={cell} />
        <td className={cell}><button className={`h-[27px] w-full pl-[3px] text-left ${tealBevel}`}>Total</button></td>
        <td className={`${cell} text-right`}>3264</td>
        {[...Array(8)].map((_, i) => <td key={i} className={cell} />)}
      </tr>
    </tbody>
  </table>
);

const DialogButton = ({ children, width, label }) => (
  <div className={`flex border-r-2 border-black p-[2px] ${width}`}>
    <button aria-label={label} className={`flex flex-1 items-center justify-center bg-[#9bdbda] whitespace-nowrap ${paleBevel}`}>{children}</button>
  </div>
);

const DrillManager = () => (
  <div className={`absolute -top-[18px] left-[1061px] flex w-[765px] flex-col bg-[#54ceae] shadow-[0_4px_14px_rgba(0,0,0,0.6)] ${mono}`}>
    <div className={`flex h-[31px] items-center gap-[6px] bg-white pr-[18px] pl-2 font-normal ${ui}`}>
      <XIcon />
      <h1 className="flex-1 text-[16px] font-normal">Drill Tool Manager</h1>
      <Square size={12} strokeWidth={2} />
      <X size={14} strokeWidth={2} className="ml-8" />
    </div>
    <div className="flex h-[33px] border-t border-black">
      <div className="flex w-[168px] border-x border-b border-black p-[2px]">
        <button className={`flex flex-1 items-center justify-between bg-[#9bdbda] pr-[14px] pl-px ${paleBevel}`}><span>Layer</span><span>:</span></button>
      </div>
      <div className="flex w-[108px] border-r border-b border-black bg-[#9bdbda] p-[2px]">
        <Field label="Layer name" value="drl" look={paleInset} />
      </div>
      <div className="ml-[151px] flex w-[186px] items-center border-x border-b border-black bg-[#9bdbda] pl-[9px]">
        Slots:
        <Menu label="Slots" value="By length" look={`ml-2 h-[27px] w-[115px] ${paleBevel}`} knob={paleBevel} />
      </div>
    </div>
    <div className="flex h-[30px] border-b border-black">
      <div className="flex w-[306px] items-center border-r-2 border-l border-black bg-[#9bdbda] pl-px">
        <label htmlFor="thickness" className="w-[168px]">Board Thickness :</label>
        <div className={`flex h-[24px] w-[104px] items-start pl-[3px] ${paleInset}`}>
          <Caret />
          <input id="thickness" defaultValue="1600" className="w-full min-w-0 bg-transparent" />
        </div>
        <span className="ml-[3px]">my</span>
      </div>
      <DialogButton width="w-[179px]">User Parameters :</DialogButton>
      <div className="flex w-[128px] items-center border-r border-black bg-[#9bdbda] p-[2px]">
        <Field label="User parameter value" value="no_hasl" look={paleInset} />
      </div>
    </div>
    <div className={`mx-[2px] mt-px h-[612px] pr-[3px] ${tealInset}`}>
      <DrillTable />
    </div>
    <div className={`mx-[2px] mt-1 flex h-[15px] items-center bg-[#41a98e] ${tealInset}`}>
      <svg width="12" height="11" viewBox="0 0 12 11"><path d="M11 0v11L1 5.500z" fill="#54ceae" stroke="#a5f0dc" /></svg>
      <div className={`h-full w-[668px] bg-[#54ceae] ${tealBevel}`} />
      <svg width="12" height="11" viewBox="0 0 12 11" className="ml-auto"><path d="M1 0v11l10-5.500z" fill="#54ceae" stroke="#2a7f68" /></svg>
    </div>
    <div className="mt-[5px] flex h-[35px] border-2 border-black">
      <div className="flex w-[42px] items-center border-r-2 border-black bg-[#ffc64a] pl-[2px] text-[13px]">T01</div>
      <DialogButton width="w-[60px]">First</DialogButton>
      <DialogButton width="w-[35px]">&lt;--</DialogButton>
      <DialogButton width="w-[35px]">--&gt;</DialogButton>
      <DialogButton width="w-[50px]">Last</DialogButton>
      <label htmlFor="index" className="flex w-[59px] items-center pl-px">Index:</label>
      <div className={`mr-1 flex h-[30px] w-[59px] items-start pl-1 ${tealInset}`}>
        <Caret />
        <input id="index" className="w-full min-w-0 bg-transparent" />
      </div>
      <DialogButton width="w-[30px] border-l" label="Highlight">
        <svg width="16" height="17" viewBox="0 0 16 17" fill="none" stroke="#000"><rect x=".5" y=".5" width="15" height="16" /><path d="M6 11c-3-4-2-8 2-8s5 4 2 8v3H6z" /></svg>
      </DialogButton>
      <DialogButton width="w-[30px]" label="Path">
        <svg width="16" height="17" viewBox="0 0 16 17" fill="none" stroke="#000"><rect x=".5" y=".5" width="15" height="16" /><path d="M13 3H4v4h7v4l-3 3-3-2-2 2" /></svg>
      </DialogButton>
      <DialogButton width="w-[30px]" label="Clear">
        <svg width="16" height="17" viewBox="0 0 16 17" fill="none" stroke="#000"><rect x=".5" y=".5" width="15" height="16" /><path d="M6 11c-3-4-2-8 2-8s5 4 2 8v3H6z" /><path d="M2 2l12 13M14 2L2 15" stroke="#e02020" strokeWidth="2" /></svg>
      </DialogButton>
      <div className="flex-1" />
      <div className="flex w-[88px] border-x-2 border-black bg-[#9bdbda] p-[2px]">
        <Menu label="Units" value="ml/my" look={`flex-1 ${paleBevel}`} knob={paleBevel} />
      </div>
      <div className="flex w-[114px] bg-[#9bdbda] p-[2px] pl-1">
        <Menu label="Mode" value="Regular" look={`flex-1 ${paleBevel}`} knob={paleBevel} />
      </div>
    </div>
    <div className="mt-1 flex h-[34px] border border-black">
      <div className="w-[213px] border-r border-black" />
      <DialogButton width="w-[131px]">Combine Tools</DialogButton>
      <div className="flex flex-1 items-center bg-[#9bdbda] pl-[12px]">
        Merge Tools :
        <Menu label="Merge tools" value="Update Tools Numbers" look={`ml-auto h-[28px] w-[214px] ${paleBevel}`} knob={paleBevel} />
      </div>
      <DialogButton width="w-[59px]">Merge</DialogButton>
    </div>
    <div className="flex h-[29px] border-b-2 border-l-2 border-black">
      <DialogButton width="flex-1">Apply</DialogButton>
      <DialogButton width="flex-1">Calc Drills</DialogButton>
      <DialogButton width="flex-1">Update Table</DialogButton>
      <DialogButton width="flex-1">Close</DialogButton>
    </div>
  </div>
);

/* ---------- Small progress window ---------- */

const ProgressWindow = () => (
  <div className="absolute -top-[8px] right-0 flex w-12 flex-col overflow-hidden bg-white shadow-[0_0_8px_rgba(0,0,0,0.5)]">
    <div className={`flex h-[31px] items-center gap-[5px] pl-2 text-[16px] text-[#999] ${ui}`}>
      <XIcon />
      Progress
    </div>
    <div className="flex h-[94px] flex-col border-2 border-r-0 border-black bg-[#9bdbda] pt-[10px] pl-[5px]">
      <svg width="18" height="18" viewBox="0 0 18 18">
        <circle cx="9" cy="9" r="8.500" fill="#fff" stroke="#000" />
        <path d="M9 9L2 4c-2 3-2 7 0 10zM9 9l7-5c2 3 2 7 0 10z" fill="#f00" stroke="#a00" />
      </svg>
      <span className="mt-[20px] pl-1 font-['Liberation_Serif',serif] text-[16px] leading-5 font-bold text-black italic">99%</span>
    </div>
  </div>
);

export default function App() {
  return (
    <main className="relative h-screen w-full overflow-hidden bg-black">
      <GraphicEditor />
      <div className="absolute top-[117px] right-0 bottom-0 w-2 bg-linear-to-b from-[#b9c8dc] via-[#d5e0ee] to-[#c4cdd8]" />
      <Excel />
      <Notepad />
      <DrillManager />
      <ProgressWindow />
      {/* Markup drawn over the windows */}
      <div className="pointer-events-none absolute top-[866px] left-[1019px] h-[94px] w-[647px] border-[5px] border-[#ffff00] shadow-[2px_3px_5px_rgba(0,0,0,0.6),inset_2px_3px_5px_rgba(0,0,0,0.5)]" />
      <svg className="pointer-events-none absolute top-0 left-0" width="2048" height="1066" fill="#f00" stroke="#f00" strokeLinecap="round">
        <path d="M681 460L717 550" strokeWidth="5" />
        <path d="M727 574L708 551 727 545z" />
        <path d="M1026 872L1070 886" strokeWidth="5" />
        <path d="M1090 893L1077 874 1063 892z" />
        <path d="M1520 1031L1296 940" strokeWidth="6" />
        <path d="M1275 932L1303 933 1291 949z" />
      </svg>
    </main>
  );
}
